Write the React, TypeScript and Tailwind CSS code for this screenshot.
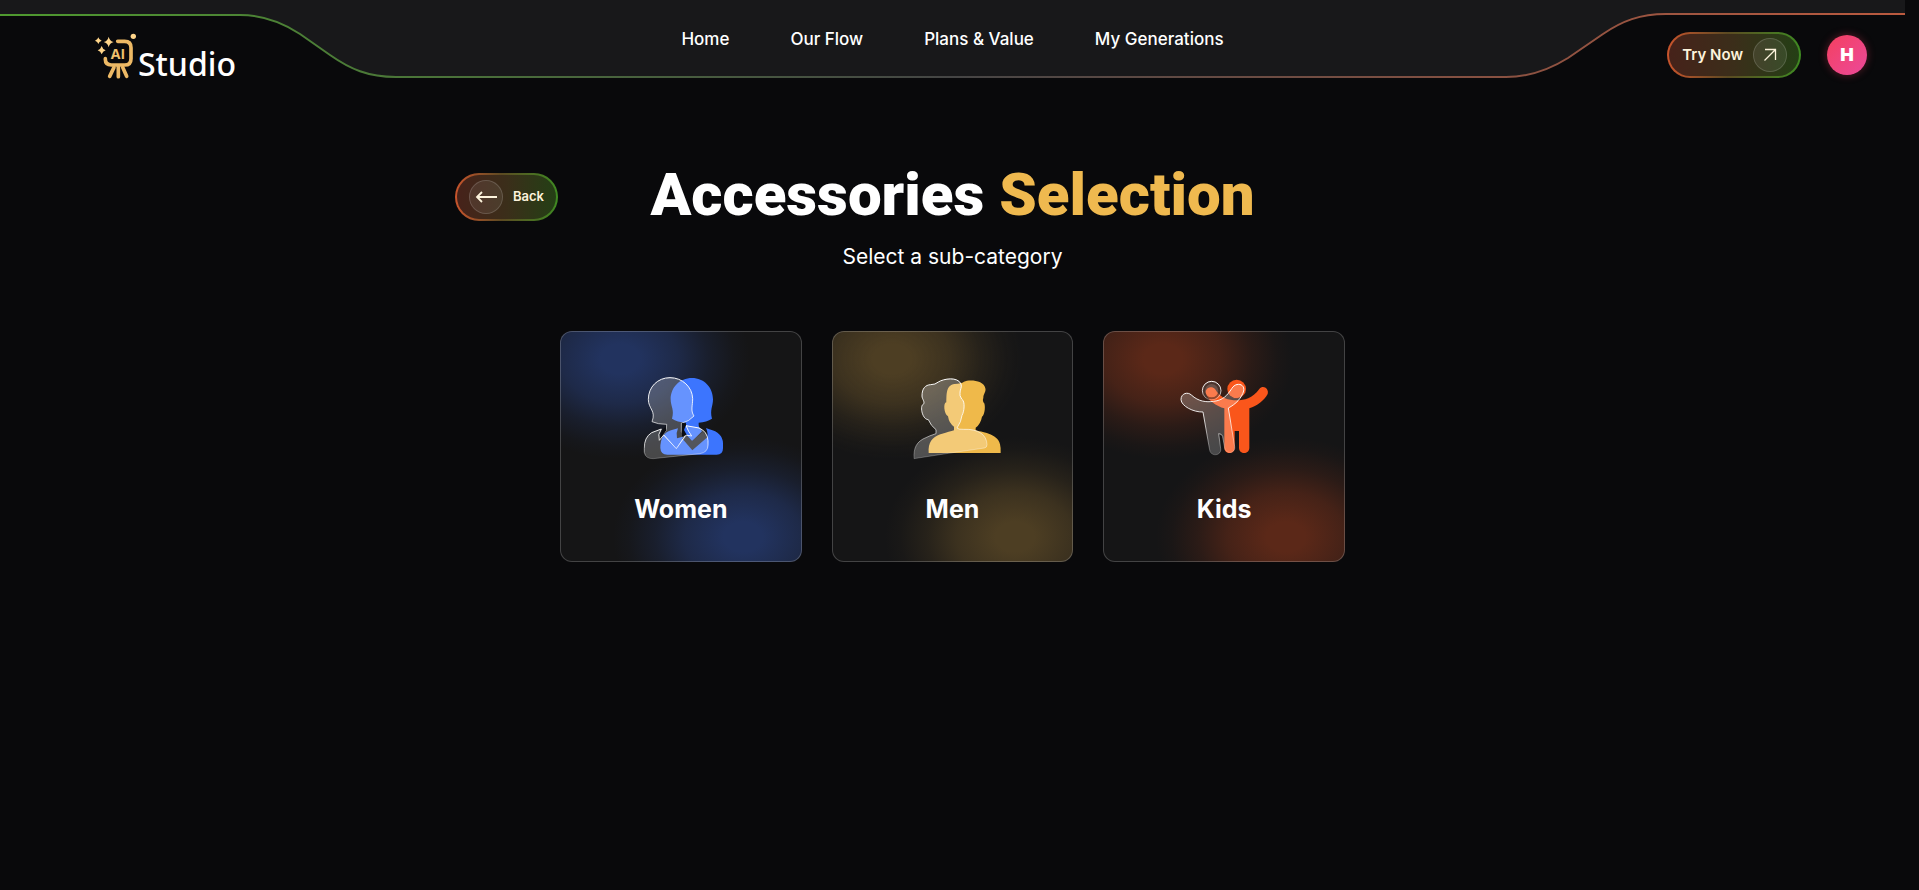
import type { ReactNode } from "react";

const navLinks = ["Home", "Our Flow", "Plans & Value", "My Generations"];

const pill =
  "flex items-center rounded-full border-2 border-transparent text-[#fdf3dc] [background:linear-gradient(90deg,#46221a,#3b2e1a_50%,#243f15)_padding-box,linear-gradient(90deg,#c9542c,#5c4a22_45%,#3f8a22)_border-box]";

const circle =
  "flex size-[34px] items-center justify-center rounded-full border border-white/15 bg-white/8";

function Logo() {
  return (
    <a href="#" className="flex items-end gap-px" aria-label="AI Studio">
      <svg viewBox="45 24 126 138" className="h-[46px] w-[42px]" aria-hidden="true">
        <g fill="none" stroke="#edb965" strokeWidth="11" strokeLinecap="round" strokeLinejoin="round">
          <path d="M113 49H134Q153 49 153 68V101Q153 120 134 120H94Q76 120 76 103V101" />
          <path d="M102 127L89 154M115 124V155M128 127L140 154" />
        </g>
        <g fill="#ffd58a">
          <path d="M55 37Q57 45 65 47Q57 49 55 57Q53 49 45 47Q53 45 55 37Z" />
          <path d="M86 35Q89 48 101 51Q89 54 86 67Q83 54 71 51Q83 48 86 35Z" />
          <path d="M65 63Q68 73 77 76Q68 79 65 88Q62 79 53 76Q62 73 65 63Z" />
          <circle cx="160" cy="34" r="8" />
        </g>
        <text x="114" y="103" textAnchor="middle" fill="#efc06d" className="font-['Open_Sans',sans-serif] text-[42px] font-bold">
          AI
        </text>
      </svg>
      <span className="font-['Noto_Sans',sans-serif] text-[32px] leading-[30px] font-medium text-white">Studio</span>
    </a>
  );
}

function HeaderShape() {
  return (
    <svg
      viewBox="0 0 1905 80"
      preserveAspectRatio="none"
      className="absolute inset-x-0 top-0 h-20 w-full"
      aria-hidden="true"
    >
      <defs>
        <linearGradient id="edge" gradientUnits="userSpaceOnUse" x1="0" y1="0" x2="1905" y2="0">
          <stop offset="0" stopColor="#4f9a2f" />
          <stop offset="0.5" stopColor="#454545" />
          <stop offset="1" stopColor="#bb5a3f" />
        </linearGradient>
      </defs>
      <path
        d="M0 0V15H240C266 15 285 24 300 34L330 55C350 69 368 77 396 77H1506C1532 77 1552 68 1568 58L1603 34C1622 21 1640 14 1666 14H1905V0Z"
        fill="#18181a"
      />
      <path
        d="M0 15H240C266 15 285 24 300 34L330 55C350 69 368 77 396 77H1506C1532 77 1552 68 1568 58L1603 34C1622 21 1640 14 1666 14H1905"
        fill="none"
        stroke="url(#edge)"
        strokeWidth="2"
      />
    </svg>
  );
}

function Header() {
  return (
    <header className="relative">
      <HeaderShape />
      <div className="relative grid h-[90px] grid-cols-[1fr_auto_1fr] items-start px-[38px]">
        <div className="flex pt-[33px] pl-[57px]">
          <Logo />
        </div>
        <nav className="flex gap-[61px] pt-[27px]">
          {navLinks.map((link) => (
            <a key={link} href="#" className="text-[17px] leading-6 font-medium text-white">
              {link}
            </a>
          ))}
        </nav>
        <div className="flex items-center justify-end gap-[26px] pt-8">
          <button type="button" className={`${pill} h-[46px] gap-2.5 pr-3 pl-[13px] text-[15px] font-semibold`}>
            Try Now
            <span className={circle}>
              <svg viewBox="0 0 16 16" className="size-4" fill="none" stroke="currentColor" strokeWidth="1.3">
                <path d="M2.5 13.5L13.5 2.5M3 2.5H13.5V13" />
              </svg>
            </span>
          </button>
          <button
            type="button"
            className="size-10 rounded-full bg-linear-to-br from-[#f43f5e] to-[#ec4899] text-lg font-black text-white shadow-[0_0_8px_rgba(244,63,94,0.35)]"
          >
            H
          </button>
        </div>
      </div>
    </header>
  );
}

function WomenIcon() {
  return (
    <svg viewBox="243 162 300 270" className="h-[90px] w-[100px]" aria-hidden="true">
      <defs>
        <linearGradient id="glassStroke" x1="0" y1="0" x2="0" y2="1">
          <stop offset="0" stopColor="#fff" />
          <stop offset="0.5" stopColor="#fff" stopOpacity="0.8" />
          <stop offset="1" stopColor="#fff" stopOpacity="0.2" />
        </linearGradient>
      </defs>
      <g fill="#3c75fe">
        <path d="M426 174C389 174 362 202 362 238C362 260 374 269 366 296Q381 306 408 308V322Q427 340 446 322V308Q470 306 486 296C479 269 489 260 489 238C489 202 462 174 426 174Z" />
        <path d="M384 325L363 331Q331 341 331 384Q332 404 352 404H500Q519 404 519 385V370Q518 338 478 328L468 324Q476 342 470 354L456 350L426 382L398 350L381 355Q377 340 384 325Z" />
        <path d="M402 316Q426 328 444 316L456 334L426 364L398 334Z" />
      </g>
      <path d="M396 355L409 345L426 363L459 336L472 352L427 391Z" fill="#23262f" />
      <g stroke="url(#glassStroke)" strokeWidth="3" strokeLinejoin="round">
        <path
          d="M360 173C323 173 295 201 295 238C295 267 319 272 306 305Q323 313 350 313L349 331L340 343L379 386L407 348L394 335V310Q418 304 432 288C421 272 428 257 428 236C427 201 397 173 360 173Z"
          fill="#fff"
          fillOpacity="0.22"
        />
        <path
          d="M334 327L305 338Q282 352 283 386V397Q287 417 310 416L450 401Q474 397 474 375V362Q472 334 447 324L408 317Q415 335 425 348L407 345L379 386L341 345L328 361Q322 343 334 327Z"
          fill="#fff"
          fillOpacity="0.22"
        />
      </g>
      <path d="M345 314L349 331L340 343L333 350Q329 338 345 322ZM396 309L409 312L402 330L410 344L396 350Z" fill="#0b0c12" />
    </svg>
  );
}

function MenIcon() {
  return (
    <svg viewBox="247 162 300 270" className="h-[90px] w-[100px]" aria-hidden="true">
      <path
        d="M327 399C325 367 337 353 362 343Q391 334 403 331V320Q388 310 385 289C373 283 370 247 380 247C381 225 378 195 405 192Q425 191 433 185C449 177 494 181 497 205C500 215 491 222 491 233Q488 240 491 247C499 250 496 287 487 290Q483 312 468 323V331C482 336 535 340 541 373Q544 385 543 399Z"
        fill="#efb94a"
      />
      <path
        d="M283 416C281 381 293 367 310 357Q332 346 349 341V329Q334 318 326 299C307 299 300 256 311 253C317 246 307 237 307 228C307 205 317 195 333 194Q347 194 356 186C372 176 414 169 424 192C428 201 420 210 421 220Q419 226 426 237C438 244 433 277 427 286Q425 305 412 324Q417 329 431 328C478 326 501 345 502 374Q502 383 494 384L386 400Z"
        fill="#fff"
        fillOpacity="0.25"
        stroke="url(#glassStroke)"
        strokeWidth="3"
      />
    </svg>
  );
}

function KidsIcon() {
  return (
    <svg viewBox="252 162 300 270" className="h-[90px] w-[100px]" aria-hidden="true">
      <g fill="#fa561b">
        <circle cx="440" cy="207" r="28" />
        <path d="M347 218C346 202 366 196 375 207C392 235 416 241 440 241C463 241 487 235 508 207C519 193 538 206 533 222C522 242 501 258 478 265V383C478 404 447 404 447 383V333H434V383C434 404 403 404 403 383V265C380 258 352 241 347 218Z" />
      </g>
      <path d="M413 222Q440 248 466 220Q462 238 440 238Q420 236 413 222Z" fill="#451c12" />
      <g fill="#fff" fillOpacity="0.22" stroke="url(#glassStroke)" strokeWidth="3">
        <circle cx="365" cy="212" r="28" />
        <path d="M273 239C273 219 294 215 304 225C326 245 348 247 371 244C399 241 412 226 425 206C437 185 466 191 461 213C455 234 438 252 415 264L434 380C437 401 408 404 404 384L398 349Q395 341 386 341L392 386C395 408 362 411 359 390L339 276C310 277 274 258 273 239Z" />
      </g>
      <circle cx="365" cy="212" r="23" fill="none" stroke="#2a1510" strokeOpacity="0.5" strokeWidth="6" />
    </svg>
  );
}

const categories: { name: string; icon: ReactNode; glow: string }[] = [
  {
    name: "Women",
    icon: <WomenIcon />,
    glow: "bg-[radial-gradient(130px_100px_at_60px_28px,#22335f_15%,#22335fb0_45%,#22335f50_68%,#22335f14_88%,transparent),radial-gradient(130px_100px_at_183px_206px,#22335f_15%,#22335fb0_45%,#22335f50_68%,#22335f14_88%,transparent)]",
  },
  {
    name: "Men",
    icon: <MenIcon />,
    glow: "bg-[radial-gradient(130px_100px_at_60px_28px,#4d3e23_15%,#4d3e23b0_45%,#4d3e2350_68%,#4d3e2314_88%,transparent),radial-gradient(130px_100px_at_183px_206px,#4d3e23_15%,#4d3e23b0_45%,#4d3e2350_68%,#4d3e2314_88%,transparent)]",
  },
  {
    name: "Kids",
    icon: <KidsIcon />,
    glow: "bg-[radial-gradient(130px_100px_at_60px_28px,#5b2818_15%,#5b2818b0_45%,#5b281850_68%,#5b281814_88%,transparent),radial-gradient(130px_100px_at_183px_206px,#5b2818_15%,#5b2818b0_45%,#5b281850_68%,#5b281814_88%,transparent)]",
  },
];

export default function App() {
  return (
    <div className="min-h-screen bg-[#09090b] pr-3.5 font-[Inter,sans-serif] text-white">
      <Header />
      <main className="mx-auto max-w-[995px] pt-[71px]">
        <div className="grid grid-cols-[1fr_auto_1fr] items-start">
          <button type="button" className={`${pill} mt-3 h-12 gap-2.5 justify-self-start px-3 text-[13px] font-semibold`}>
            <span className={circle}>
              <svg viewBox="0 0 22 12" className="h-3 w-[22px]" fill="none" stroke="currentColor" strokeWidth="1.8">
                <path d="M22 6H2M7 1L2 6L7 11" />
              </svg>
            </span>
            Back
          </button>
          <div className="text-center">
            <h1 className="font-[Roboto,sans-serif] text-[60px] leading-[68px] font-black">
              Accessories <span className="text-[#efb94f]">Selection</span>
            </h1>
            <p className="mt-3 text-[21px] leading-8">Select a sub-category</p>
          </div>
        </div>
        <div className="mx-auto mt-[58px] grid max-w-[785px] grid-cols-3 gap-[30px]">
          {categories.map(({ name, icon, glow }) => (
            <button
              key={name}
              type="button"
              className={`${glow} flex flex-col items-center rounded-xl border border-white/20 bg-[#151516] bg-origin-border pt-[42px] pb-9`}
            >
              {icon}
              <span className="mt-[29px] text-[25px] leading-8 font-bold">{name}</span>
            </button>
          ))}
        </div>
      </main>
    </div>
  );
}
